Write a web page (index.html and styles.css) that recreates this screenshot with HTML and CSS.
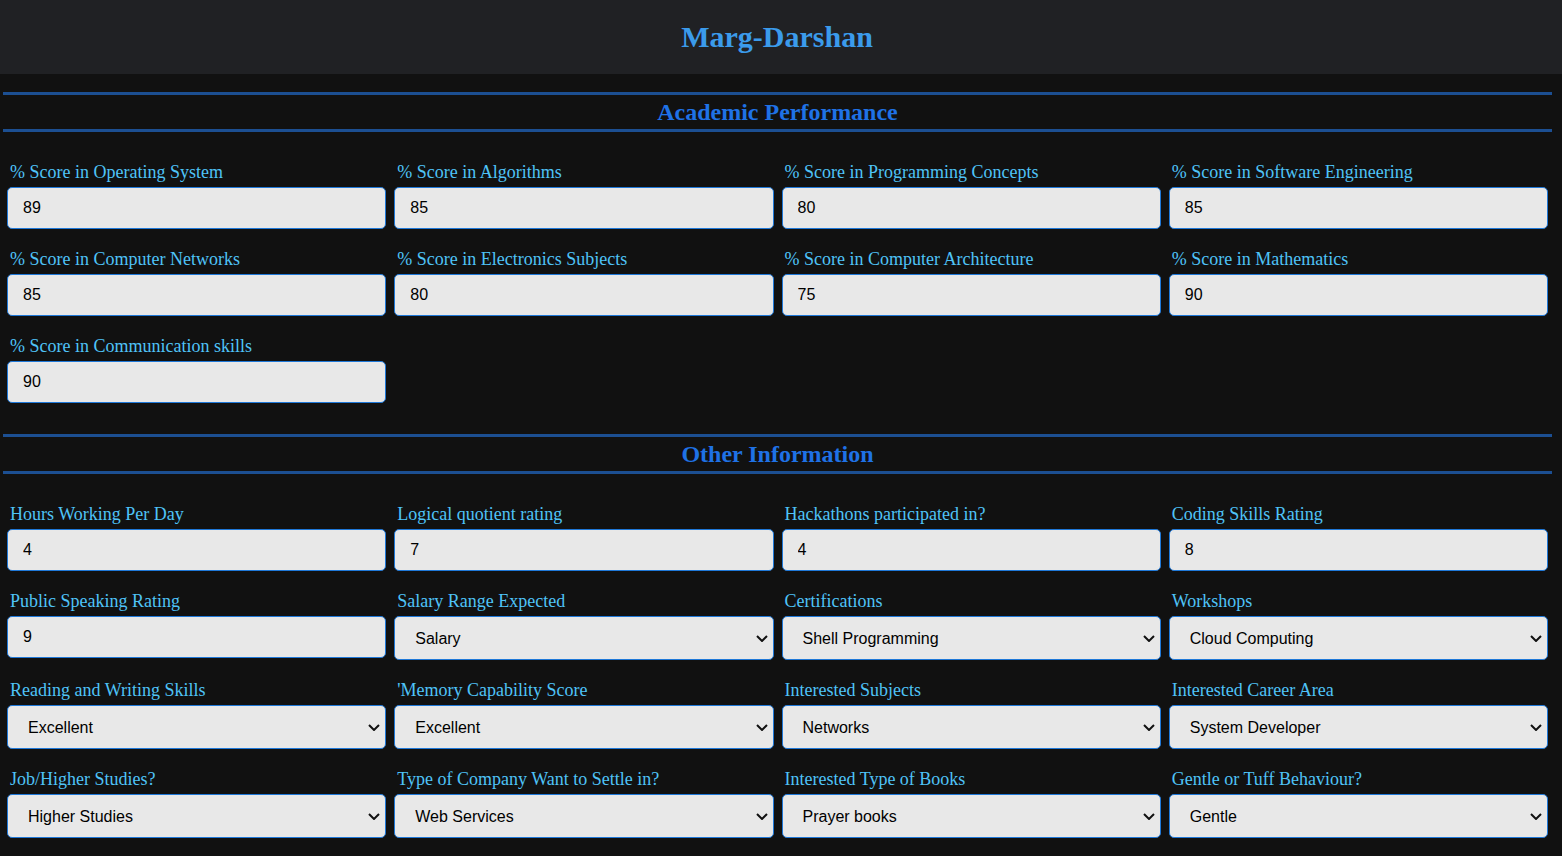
FILE: index.html
```html
<!DOCTYPE html>
<html lang="en">
<head>
<meta charset="utf-8">
<title>Marg-Darshan</title>
<link rel="stylesheet" href="styles.css">
</head>
<body>
<header class="top">
  <h1 class="brand">Marg-Darshan</h1>
</header>
<main class="page">
  <section class="block">
    <h2 class="block-title">Academic Performance</h2>
    <div class="grid">
      <div class="field"><label class="lbl">% Score in Operating System</label><input class="ctl" type="text" value="89"></div>
      <div class="field"><label class="lbl">% Score in Algorithms</label><input class="ctl" type="text" value="85"></div>
      <div class="field"><label class="lbl">% Score in Programming Concepts</label><input class="ctl" type="text" value="80"></div>
      <div class="field"><label class="lbl">% Score in Software Engineering</label><input class="ctl" type="text" value="85"></div>
      <div class="field"><label class="lbl">% Score in Computer Networks</label><input class="ctl" type="text" value="85"></div>
      <div class="field"><label class="lbl">% Score in Electronics Subjects</label><input class="ctl" type="text" value="80"></div>
      <div class="field"><label class="lbl">% Score in Computer Architecture</label><input class="ctl" type="text" value="75"></div>
      <div class="field"><label class="lbl">% Score in Mathematics</label><input class="ctl" type="text" value="90"></div>
      <div class="field"><label class="lbl">% Score in Communication skills</label><input class="ctl" type="text" value="90"></div>
    </div>
  </section>
  <section class="block">
    <h2 class="block-title">Other Information</h2>
    <div class="grid">
      <div class="field"><label class="lbl">Hours Working Per Day</label><input class="ctl" type="text" value="4"></div>
      <div class="field"><label class="lbl">Logical quotient rating</label><input class="ctl" type="text" value="7"></div>
      <div class="field"><label class="lbl">Hackathons participated in?</label><input class="ctl" type="text" value="4"></div>
      <div class="field"><label class="lbl">Coding Skills Rating</label><input class="ctl" type="text" value="8"></div>
      <div class="field"><label class="lbl">Public Speaking Rating</label><input class="ctl" type="text" value="9"></div>
      <div class="field"><label class="lbl">Salary Range Expected</label><div class="sel-wrap"><select class="ctl sel"><option>Salary</option></select><svg class="chev" viewBox="0 0 12 7" width="12" height="7"><path d="M1 1 L6 6 L11 1" fill="none" stroke="#111" stroke-width="2"/></svg></div></div>
      <div class="field"><label class="lbl">Certifications</label><div class="sel-wrap"><select class="ctl sel"><option>Shell Programming</option></select><svg class="chev" viewBox="0 0 12 7" width="12" height="7"><path d="M1 1 L6 6 L11 1" fill="none" stroke="#111" stroke-width="2"/></svg></div></div>
      <div class="field"><label class="lbl">Workshops</label><div class="sel-wrap"><select class="ctl sel"><option>Cloud Computing</option></select><svg class="chev" viewBox="0 0 12 7" width="12" height="7"><path d="M1 1 L6 6 L11 1" fill="none" stroke="#111" stroke-width="2"/></svg></div></div>
      <div class="field"><label class="lbl">Reading and Writing Skills</label><div class="sel-wrap"><select class="ctl sel"><option>Excellent</option></select><svg class="chev" viewBox="0 0 12 7" width="12" height="7"><path d="M1 1 L6 6 L11 1" fill="none" stroke="#111" stroke-width="2"/></svg></div></div>
      <div class="field"><label class="lbl">'Memory Capability Score</label><div class="sel-wrap"><select class="ctl sel"><option>Excellent</option></select><svg class="chev" viewBox="0 0 12 7" width="12" height="7"><path d="M1 1 L6 6 L11 1" fill="none" stroke="#111" stroke-width="2"/></svg></div></div>
      <div class="field"><label class="lbl">Interested Subjects</label><div class="sel-wrap"><select class="ctl sel"><option>Networks</option></select><svg class="chev" viewBox="0 0 12 7" width="12" height="7"><path d="M1 1 L6 6 L11 1" fill="none" stroke="#111" stroke-width="2"/></svg></div></div>
      <div class="field"><label class="lbl">Interested Career Area</label><div class="sel-wrap"><select class="ctl sel"><option>System Developer</option></select><svg class="chev" viewBox="0 0 12 7" width="12" height="7"><path d="M1 1 L6 6 L11 1" fill="none" stroke="#111" stroke-width="2"/></svg></div></div>
      <div class="field"><label class="lbl">Job/Higher Studies?</label><div class="sel-wrap"><select class="ctl sel"><option>Higher Studies</option></select><svg class="chev" viewBox="0 0 12 7" width="12" height="7"><path d="M1 1 L6 6 L11 1" fill="none" stroke="#111" stroke-width="2"/></svg></div></div>
      <div class="field"><label class="lbl">Type of Company Want to Settle in?</label><div class="sel-wrap"><select class="ctl sel"><option>Web Services</option></select><svg class="chev" viewBox="0 0 12 7" width="12" height="7"><path d="M1 1 L6 6 L11 1" fill="none" stroke="#111" stroke-width="2"/></svg></div></div>
      <div class="field"><label class="lbl">Interested Type of Books</label><div class="sel-wrap"><select class="ctl sel"><option>Prayer books</option></select><svg class="chev" viewBox="0 0 12 7" width="12" height="7"><path d="M1 1 L6 6 L11 1" fill="none" stroke="#111" stroke-width="2"/></svg></div></div>
      <div class="field"><label class="lbl">Gentle or Tuff Behaviour?</label><div class="sel-wrap"><select class="ctl sel"><option>Gentle</option></select><svg class="chev" viewBox="0 0 12 7" width="12" height="7"><path d="M1 1 L6 6 L11 1" fill="none" stroke="#111" stroke-width="2"/></svg></div></div>
    </div>
  </section>
</main>
</body>
</html>
```
FILE: styles.css
```css
html, body {
  margin: 0;
  padding: 0;
  background: #111111;
  font-family: "Liberation Serif", "Times New Roman", serif;
}

.top {
  height: 74px;
  background: #202124;
  display: flex;
  align-items: center;
  justify-content: center;
  padding-right: 8px;
}

.brand {
  margin: 0;
  font-size: 30px;
  font-weight: bold;
  color: #3b9beb;
  font-family: "Liberation Serif", "Times New Roman", serif;
}

.page {
  padding: 18px 10px 0 3px;
}

.block {
  padding-bottom: 31px;
}

.block-title {
  margin: 0;
  height: 34px;
  line-height: 34px;
  border-top: 3px solid #1c4f92;
  border-bottom: 3px solid #1c4f92;
  text-align: center;
  font-size: 24px;
  font-weight: bold;
  color: #1f72e6;
}

.grid {
  display: grid;
  grid-template-columns: repeat(4, 1fr);
  row-gap: 20px;
  padding-top: 30px;
}

.field {
  display: flex;
  flex-direction: column;
  padding: 0 4px 0 4px;
}

.lbl {
  display: block;
  padding-left: 3px;
  margin-bottom: 5px;
  font-size: 18px;
  line-height: 20px;
  color: #4fc3f7;
}

.ctl {
  box-sizing: border-box;
  width: 100%;
  height: 42px;
  margin: 0;
  padding: 0 15px;
  background: #e8e8e8;
  border: 1px solid #1f78d8;
  border-radius: 5px;
  font-family: "Liberation Sans", Arial, sans-serif;
  font-size: 16px;
  color: #000;
}

.sel-wrap {
  position: relative;
}

.sel {
  -webkit-appearance: none;
  appearance: none;
  height: 44px;
  padding-left: 20px;
  padding-right: 30px;
}

.chev {
  position: absolute;
  right: 6px;
  top: 19px;
  pointer-events: none;
}
```
